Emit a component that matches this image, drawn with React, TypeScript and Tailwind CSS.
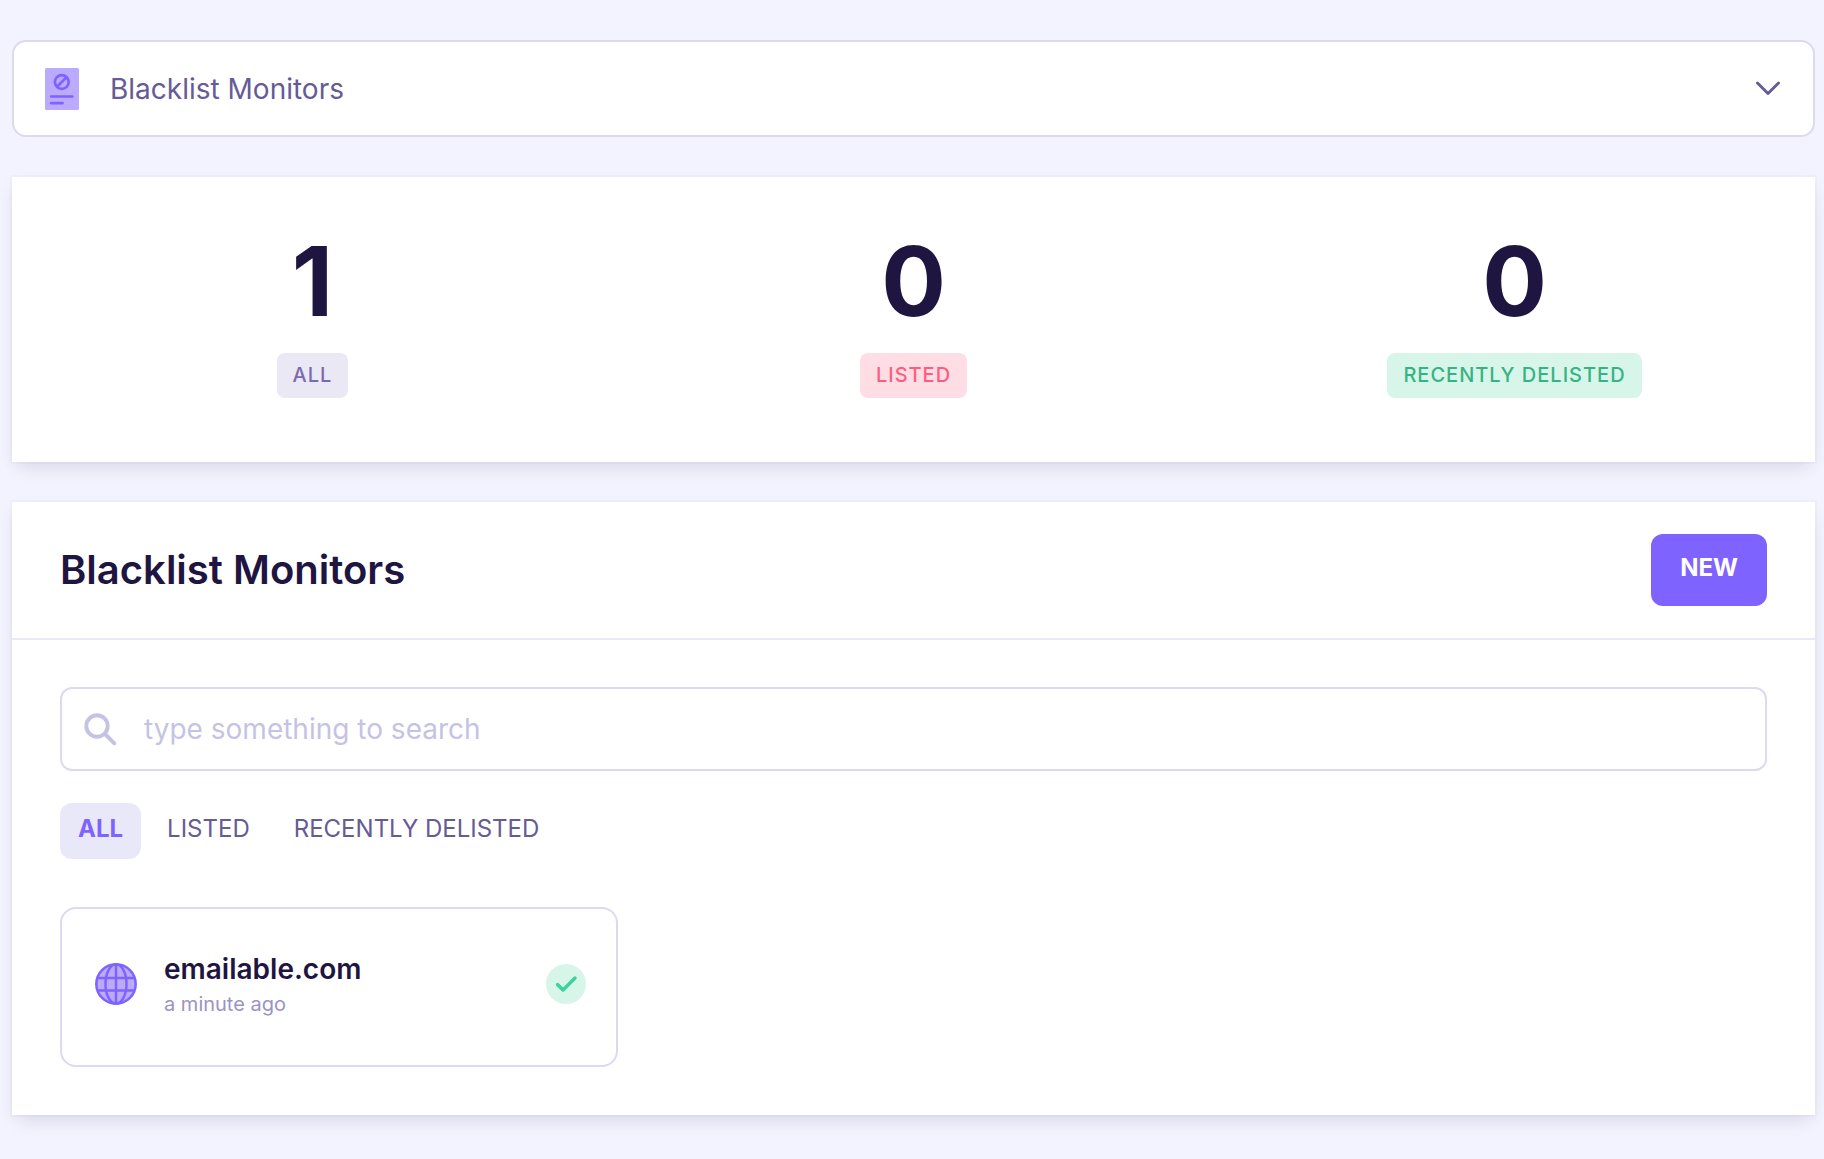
import { useState } from 'react';

const stats = [
  { value: 1, label: 'ALL', badge: 'bg-[#eae8f4] text-[#7a6bb0]' },
  { value: 0, label: 'LISTED', badge: 'bg-[#ffdde4] text-[#ff5c80]' },
  { value: 0, label: 'RECENTLY DELISTED', badge: 'bg-[#d8f5ea] text-[#36b384]' },
];

const filters = ['ALL', 'LISTED', 'RECENTLY DELISTED'];

const monitors = [{ domain: 'emailable.com', checked: 'a minute ago' }];

const cardShadow =
  'shadow-[0_0_0_2px_rgba(30,21,65,0.02),0_4px_16px_rgba(30,21,65,0.03),0_10px_18px_-6px_rgba(30,21,65,0.1)]';

function BlacklistIcon({ className }: { className?: string }) {
  return (
    <svg viewBox="0 0 34 42" fill="none" className={className} aria-hidden="true">
      <rect width="34" height="42" rx="1.5" fill="#baabff" />
      <g stroke="#7f63ff" strokeWidth="2.7" strokeLinecap="round">
        <circle cx="16.8" cy="14" r="6.9" />
        <path d="M12 18.8 21.6 9.2" />
        <path d="M6.2 28.5h21.2M6.2 35.2h11.3" />
      </g>
    </svg>
  );
}

function GlobeIcon({ className }: { className?: string }) {
  return (
    <svg viewBox="0 0 42 42" fill="none" className={className} aria-hidden="true">
      <g stroke="#7f63ff" strokeWidth="2.5">
        <circle cx="21" cy="21" r="19.7" fill="#baabff" />
        <ellipse cx="21" cy="21" rx="10.5" ry="19.7" />
        <path d="M21 1v40M2.5 15h37M2.5 27.4h37" />
      </g>
    </svg>
  );
}

export default function App() {
  const [filter, setFilter] = useState('ALL');
  const [query, setQuery] = useState('');

  const visible = monitors.filter(
    (m) => filter === 'ALL' && m.domain.includes(query.toLowerCase())
  );

  return (
    <main className="min-h-screen bg-[#f3f3ff] pt-10 pb-10 pl-3 pr-[9px] flex flex-col gap-10 font-['Inter',sans-serif] text-[#1e1541]">
      {/* Section picker */}
      <div className="relative">
        <select
          aria-label="Section"
          className="block w-full h-[97px] appearance-none rounded-[14px] border-2 border-[#dadaf2] bg-white pl-24 pr-20 text-[28px] text-[#655b95] outline-none"
        >
          <option>Blacklist Monitors</option>
        </select>
        <BlacklistIcon className="pointer-events-none absolute left-[33px] top-7 w-[34px] h-[42px]" />
        <svg
          viewBox="0 0 24 14"
          fill="none"
          stroke="#655b95"
          strokeWidth="2.9"
          strokeLinecap="round"
          strokeLinejoin="round"
          className="pointer-events-none absolute right-[35px] top-[41px] w-6 h-[14px]"
          aria-hidden="true"
        >
          <path d="M1.5 2 12 12.5 22.5 2" />
        </svg>
      </div>

      {/* Totals */}
      <section className={`grid grid-cols-3 bg-white pt-14 pb-16 ${cardShadow}`}>
        {stats.map((stat) => (
          <div key={stat.label} className="flex flex-col items-center gap-6">
            <span className="text-[96px] leading-[96px] font-bold">{stat.value}</span>
            <span
              className={`rounded-lg px-4 py-2.5 text-[20px] leading-[25px] font-medium tracking-wider ${stat.badge}`}
            >
              {stat.label}
            </span>
          </div>
        ))}
      </section>

      {/* Monitors */}
      <section className={`bg-white ${cardShadow}`}>
        <header className="flex items-center justify-between border-b-2 border-[#eae9f8] px-12 py-8">
          <h1 className="text-[40px] leading-[48px] font-semibold">Blacklist Monitors</h1>
          <button className="rounded-xl bg-[#7f63ff] px-[29px] pt-5 pb-6 text-2xl leading-7 font-bold text-white">
            NEW
          </button>
        </header>

        <div className="px-12 pt-[47px] pb-12">
          <label className="flex h-[84px] items-center gap-[27px] rounded-xl border-2 border-[#dadaf0] px-[22px]">
            <svg
              viewBox="0 0 33 33"
              fill="none"
              stroke="#c5c3e3"
              strokeWidth="3.9"
              strokeLinecap="round"
              className="w-[33px] h-[33px] shrink-0"
              aria-hidden="true"
            >
              <circle cx="13" cy="13" r="10.7" />
              <path d="m21 21 9.3 9.3" />
            </svg>
            <input
              type="text"
              aria-label="Search monitors"
              value={query}
              onChange={(e) => setQuery(e.target.value)}
              placeholder="type something to search"
              className="min-w-0 flex-1 text-[28px] outline-none placeholder:text-[#c5c3e3]"
            />
          </label>

          <div className="mt-8 flex gap-2">
            {filters.map((name) => (
              <button
                key={name}
                onClick={() => setFilter(name)}
                className={`rounded-xl px-[18px] pt-3 pb-4 text-2xl leading-7 ${
                  filter === name ? 'bg-[#e9e8f9] font-bold text-[#7f63ff]' : 'text-[#655b95]'
                }`}
              >
                {name}
              </button>
            ))}
          </div>

          <div className="mt-12 grid grid-cols-3 gap-4">
            {visible.map((m) => (
              <a
                key={m.domain}
                href="#"
                className="flex items-center rounded-2xl border-2 border-[#dadaf2] pt-10 pb-[46px] pl-[33px] pr-[30px]"
              >
                <GlobeIcon className="w-[42px] h-[42px] shrink-0" />
                <div className="ml-[27px] flex-1">
                  <div className="text-[28px] leading-10 font-semibold">{m.domain}</div>
                  <div className="text-[20px] leading-[30px] text-[#9a93c6]">{m.checked}</div>
                </div>
                <svg viewBox="0 0 40 40" fill="none" className="w-10 h-10 shrink-0" aria-hidden="true">
                  <circle cx="20" cy="20" r="20" fill="#d8f5ea" />
                  <path
                    d="M11.5 20.5 17 26 29 14"
                    stroke="#3ad29f"
                    strokeWidth="3.4"
                    strokeLinecap="round"
                    strokeLinejoin="round"
                  />
                </svg>
              </a>
            ))}
          </div>
        </div>
      </section>
    </main>
  );
}
